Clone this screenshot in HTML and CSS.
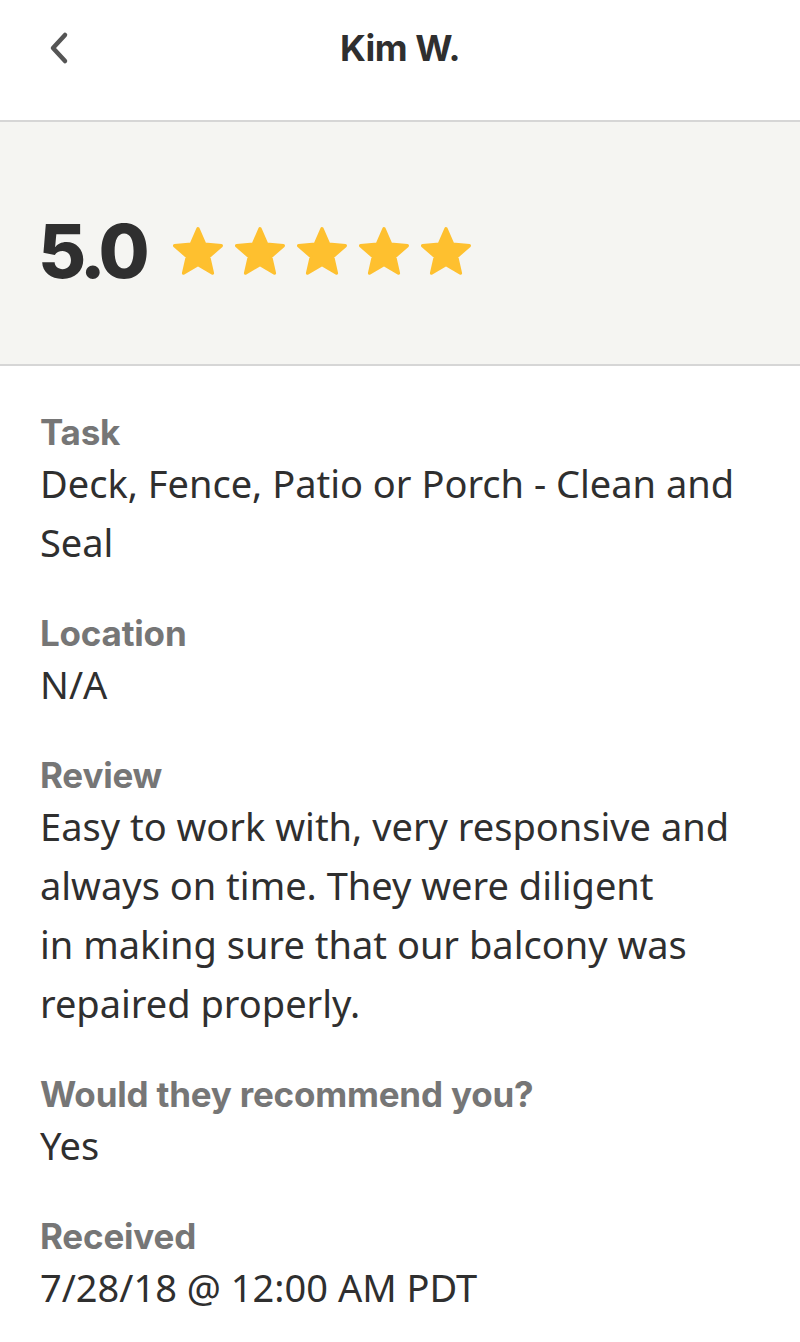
FILE: index.html
```html
<!DOCTYPE html>
<html lang="en">
<head>
  <meta charset="UTF-8">
  <title>Kim W. - Review</title>
  <link rel="stylesheet" href="styles.css">
</head>
<body>
  <header class="top-bar">
    <span class="back-btn">
      <svg width="22" height="34" viewBox="0 0 22 34">
        <path d="M17 4 L5 17 L17 30" fill="none" stroke="#555" stroke-width="4.5" stroke-linecap="round" stroke-linejoin="round"/>
      </svg>
    </span>
    <h1 class="top-title">Kim W.</h1>
  </header>

  <section class="rating">
    <span class="rating-score">5.0</span>
    <div class="stars">
      <svg class="star" viewBox="2 1.5 46 44"><path d="M25 3 L31.2 17.2 L46.5 18.6 L34.9 28.8 L38.3 43.8 L25 35.9 L11.7 43.8 L15.1 28.8 L3.5 18.6 L18.8 17.2 Z"/></svg>
      <svg class="star" viewBox="2 1.5 46 44"><path d="M25 3 L31.2 17.2 L46.5 18.6 L34.9 28.8 L38.3 43.8 L25 35.9 L11.7 43.8 L15.1 28.8 L3.5 18.6 L18.8 17.2 Z"/></svg>
      <svg class="star" viewBox="2 1.5 46 44"><path d="M25 3 L31.2 17.2 L46.5 18.6 L34.9 28.8 L38.3 43.8 L25 35.9 L11.7 43.8 L15.1 28.8 L3.5 18.6 L18.8 17.2 Z"/></svg>
      <svg class="star" viewBox="2 1.5 46 44"><path d="M25 3 L31.2 17.2 L46.5 18.6 L34.9 28.8 L38.3 43.8 L25 35.9 L11.7 43.8 L15.1 28.8 L3.5 18.6 L18.8 17.2 Z"/></svg>
      <svg class="star" viewBox="2 1.5 46 44"><path d="M25 3 L31.2 17.2 L46.5 18.6 L34.9 28.8 L38.3 43.8 L25 35.9 L11.7 43.8 L15.1 28.8 L3.5 18.6 L18.8 17.2 Z"/></svg>
    </div>
  </section>

  <main class="details">
    <div class="detail">
      <div class="detail-label">Task</div>
      <div class="detail-value">Deck, Fence, Patio or Porch - Clean and Seal</div>
    </div>
    <div class="detail">
      <div class="detail-label">Location</div>
      <div class="detail-value">N/A</div>
    </div>
    <div class="detail">
      <div class="detail-label">Review</div>
      <div class="detail-value">Easy to work with, very responsive and always on time. They were diligent<br>in making sure that our balcony was repaired properly.</div>
    </div>
    <div class="detail">
      <div class="detail-label">Would they recommend you?</div>
      <div class="detail-value">Yes</div>
    </div>
    <div class="detail">
      <div class="detail-label">Received</div>
      <div class="detail-value">7/28/18 @ 12:00 AM PDT</div>
    </div>
  </main>
</body>
</html>
```

FILE: styles.css
```css
* {
  box-sizing: border-box;
}

body {
  margin: 0;
  padding: 0;
  background: #ffffff;
  font-family: 'Noto Sans', sans-serif;
  color: #2f2f2f;
}

.top-bar {
  height: 122px;
  border-bottom: 2px solid #d6d6d6;
  display: flex;
  justify-content: center;
  padding-top: 26px;
  position: relative;
}

.back-btn {
  position: absolute;
  left: 48px;
  top: 31px;
  display: flex;
}

.top-title {
  margin: 0;
  font-family: 'Inter', sans-serif;
  font-size: 36px;
  font-weight: 700;
  line-height: 44px;
  letter-spacing: -0.5px;
  color: #2f2f2f;
}

.rating {
  height: 244px;
  background: #f5f5f2;
  border-bottom: 2px solid #d6d6d6;
  display: flex;
  align-items: center;
  padding: 16px 40px 0 38px;
  gap: 28px;
}

.rating-score {
  font-family: 'Inter', sans-serif;
  font-size: 74px;
  font-weight: 800;
  letter-spacing: -5px;
  line-height: 1;
  color: #2f2f2f;
}

.stars {
  display: flex;
  gap: 12px;
}

.star {
  width: 50px;
  height: 48px;
  fill: #fec02f;
  stroke: #fec02f;
  stroke-width: 3;
  stroke-linejoin: round;
}

.details {
  padding: 44px 40px 0;
  display: flex;
  flex-direction: column;
  gap: 39px;
}

.detail-label {
  font-family: 'Inter', sans-serif;
  font-size: 35px;
  font-weight: 700;
  line-height: 44px;
  letter-spacing: -0.2px;
  color: #767676;
}

.detail-value {
  font-size: 38px;
  line-height: 59px;
  color: #2f2f2f;
}
```
